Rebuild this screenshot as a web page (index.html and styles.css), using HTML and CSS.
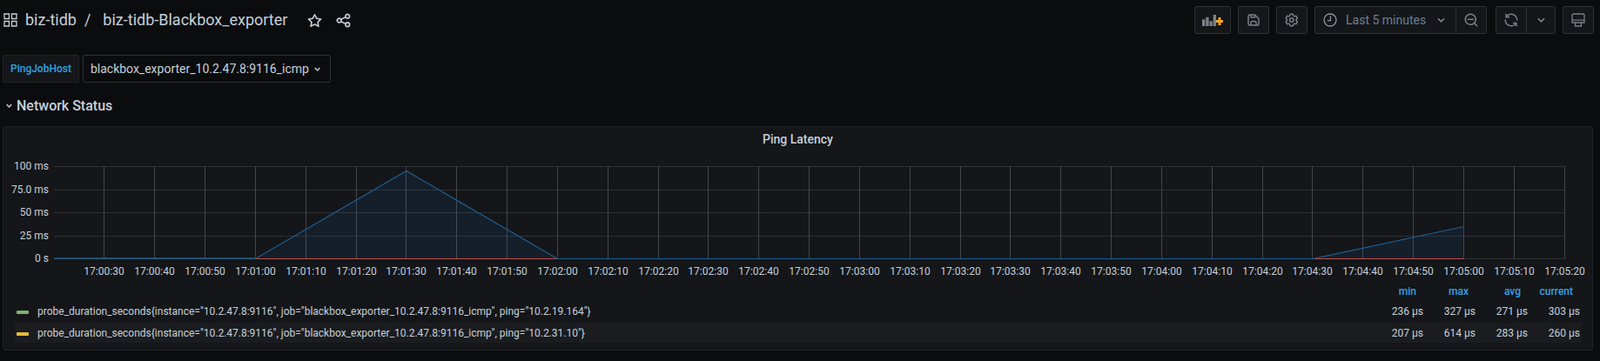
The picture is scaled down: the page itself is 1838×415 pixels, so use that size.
FILE: index.html
```html
<!DOCTYPE html>
<html lang="en">
<head>
    <meta charset="UTF-8">
    <title>biz-tidb-Blackbox_exporter</title>
    <link rel="stylesheet" href="styles.css">
</head>

<body>

<header class="navbar">
    <div class="crumbs">
        <svg class="ico ico-apps" viewBox="0 0 16 16"><path d="M1 1h5.5v5.5H1zM9.5 1H15v5.5H9.5zM1 9.5h5.5V15H1zM9.5 9.5H15V15H9.5z"/></svg>
        <span class="crumb">biz-tidb</span>
        <span class="crumb slash">/</span>
        <span class="crumb">biz-tidb-Blackbox_exporter</span>
        <svg class="uni uni-light uni-star" viewBox="0 0 24 24"><path d="M22,9.67A1,1,0,0,0,21.14,9l-5.69-.83L12.9,3a1,1,0,0,0-1.8,0L8.55,8.16,2.86,9a1,1,0,0,0-.81.68,1,1,0,0,0,.25,1l4.13,4-1,5.68A1,1,0,0,0,6.9,21.44L12,18.77l5.1,2.67a.93.93,0,0,0,.46.12,1,1,0,0,0,.59-.19,1,1,0,0,0,.4-1l-1-5.68,4.13-4A1,1,0,0,0,22,9.67Zm-6.15,4a1,1,0,0,0-.29.88l.72,4.2-3.76-2a1.06,1.06,0,0,0-.94,0l-3.76,2,.72-4.2a1,1,0,0,0-.29-.88l-3-3,4.21-.61a1,1,0,0,0,.76-.55L12,5.7l1.88,3.82a1,1,0,0,0,.76.55l4.21.61Z"/></svg>
        <svg class="uni uni-light uni-share" viewBox="0 0 24 24"><path d="M18,14a4,4,0,0,0-3.08,1.48l-5.1-2.35a3.64,3.64,0,0,0,0-2.26l5.1-2.35A4,4,0,1,0,14,6a4.17,4.17,0,0,0,.07.71L8.79,9.14a4,4,0,1,0,0,5.72l5.28,2.43A4.17,4.17,0,0,0,14,18a4,4,0,1,0,4-4ZM18,4a2,2,0,1,1-2,2A2,2,0,0,1,18,4ZM6,14a2,2,0,1,1,2-2A2,2,0,0,1,6,14Zm12,6a2,2,0,1,1,2-2A2,2,0,0,1,18,20Z"/></svg>
    </div>

    <div class="tools">
        <div class="btn btn-add">
            <svg viewBox="0 0 24 13"><path class="bars" d="M0 5.3h3.4V13H0zM4.2 2.7h3.4V13H4.2zM8.4 7.3h3.4V13H8.4zM12.6 0H16v13h-3.4z"/><path class="plus" d="M18.5 3h3v3H24v3h-2.5v3h-3V9H16V6h2.5z"/></svg>
        </div>
        <div class="btn btn-square">
            <svg class="uni" viewBox="0 0 24 24"><path d="M20.71,9.29l-6-6a1,1,0,0,0-.32-.21A1.09,1.09,0,0,0,14,3H6A3,3,0,0,0,3,6V18a3,3,0,0,0,3,3H18a3,3,0,0,0,3-3V10A1,1,0,0,0,20.71,9.29ZM9,5h4V7H9Zm6,14H9V16a1,1,0,0,1,1-1h4a1,1,0,0,1,1,1Zm4-1a1,1,0,0,1-1,1H17V16a3,3,0,0,0-3-3H10a3,3,0,0,0-3,3v3H6a1,1,0,0,1-1-1V6A1,1,0,0,1,6,5H7V8A1,1,0,0,0,8,9h6a1,1,0,0,0,1-1V6.41l4,4Z"/></svg>
        </div>
        <div class="btn btn-square">
            <svg class="uni" viewBox="0 0 24 24"><path d="M19.9,12.66a1,1,0,0,1,0-1.32L21.18,9.9a1,1,0,0,0,.12-1.17l-2-3.46a1,1,0,0,0-1.07-.48l-1.88.38a1,1,0,0,1-1.15-.66l-.61-1.83A1,1,0,0,0,13.64,2h-4a1,1,0,0,0-1,.68L8.08,4.51a1,1,0,0,1-1.15.66L5,4.79A1,1,0,0,0,4,5.27L2,8.73A1,1,0,0,0,2.1,9.9l1.27,1.44a1,1,0,0,1,0,1.32L2.1,14.1A1,1,0,0,0,2,15.27l2,3.46a1,1,0,0,0,1.07.48l1.88-.38a1,1,0,0,1,1.15.66l.61,1.83a1,1,0,0,0,1,.68h4a1,1,0,0,0,.95-.68l.61-1.83a1,1,0,0,1,1.15-.66l1.88.38a1,1,0,0,0,1.07-.48l2-3.46a1,1,0,0,0-.12-1.17ZM18.41,14l.8.9-1.28,2.22-1.18-.24a3,3,0,0,0-3.45,2L12.92,20H10.36L10,18.86a3,3,0,0,0-3.45-2l-1.18.24L4.07,14.89l.8-.9a3,3,0,0,0,0-4l-.8-.9L5.35,6.89l1.18.24a3,3,0,0,0,3.45-2L10.36,4h2.56l.38,1.14a3,3,0,0,0,3.45,2l1.18-.24,1.28,2.22-.8.9A3,3,0,0,0,18.41,14ZM11.64,8a4,4,0,1,0,4,4A4,4,0,0,0,11.64,8Zm0,6a2,2,0,1,1,2-2A2,2,0,0,1,11.64,14Z"/></svg>
        </div>
        <div class="btn-group">
            <div class="btn btn-time">
                <svg class="ico ico-clock" viewBox="0 0 16 16"><circle cx="8" cy="8" r="7"/><path d="M8.4 3.6V8.6H4.8"/></svg>
                <span class="time-text">Last 5 minutes</span>
                <svg class="chev" viewBox="0 0 10 6"><path d="M1 1l4 4 4-4"/></svg>
            </div>
            <div class="btn btn-square joined">
                <svg class="uni" viewBox="0 0 24 24"><path d="M21.71,20.29,18,16.61A9,9,0,1,0,16.61,18l3.68,3.68a1,1,0,0,0,1.42,0A1,1,0,0,0,21.71,20.29ZM11,18a7,7,0,1,1,7-7A7,7,0,0,1,11,18Zm4-8H7a1,1,0,0,0,0,2h8a1,1,0,0,0,0-2Z"/></svg>
            </div>
        </div>
        <div class="btn-group refresh">
            <div class="btn btn-square">
                <svg class="uni" viewBox="0 0 24 24"><path d="M19.91,15.51H15.38a1,1,0,0,0,0,2h2.4A8,8,0,0,1,4,12a1,1,0,0,0-2,0,10,10,0,0,0,16.88,7.23V21a1,1,0,0,0,2,0V16.5A1,1,0,0,0,19.91,15.51ZM12,2A10,10,0,0,0,5.12,4.77V3a1,1,0,0,0-2,0V7.5a1,1,0,0,0,1,1h4.5a1,1,0,0,0,0-2H6.22A8,8,0,0,1,20,12a1,1,0,0,0,2,0A10,10,0,0,0,12,2Z"/></svg>
            </div>
            <div class="btn btn-chev joined">
                <svg class="chev" viewBox="0 0 10 6"><path d="M1 1l4 4 4-4"/></svg>
            </div>
        </div>
        <div class="btn btn-square">
            <svg class="ico" viewBox="0 0 16 16"><path d="M2.5 1h11A1.5 1.5 0 0 1 15 2.5V11H1V2.5A1.5 1.5 0 0 1 2.5 1zM1 8.2h14M4.5 11v4h7v-4"/></svg>
        </div>
    </div>
</header>

<section class="submenu">
    <label class="var-label">PingJobHost</label>
    <div class="var-value">
        <span>blackbox_exporter_10.2.47.8:9116_icmp</span>
        <svg class="chev chev-small" viewBox="0 0 10 6"><path d="M1 1l4 4 4-4"/></svg>
    </div>
</section>

<div class="row-title">
    <svg class="chev chev-small" viewBox="0 0 10 6"><path d="M1 1l4 4 4-4"/></svg>
    <span>Network Status</span>
</div>

<article class="panel">
    <h2 class="panel-title">Ping Latency</h2>

    <svg id="chart" class="chart" width="1825" height="151"></svg>

    <table class="legend">
        <thead>
            <tr>
                <th class="name"></th>
                <th>min</th>
                <th>max</th>
                <th>avg</th>
                <th>current</th>
            </tr>
        </thead>
        <tbody>
            <tr>
                <td class="name"><i class="swatch green"></i>probe_duration_seconds{instance="10.2.47.8:9116", job="blackbox_exporter_10.2.47.8:9116_icmp", ping="10.2.19.164"}</td>
                <td>236 µs</td>
                <td>327 µs</td>
                <td>271 µs</td>
                <td>303 µs</td>
            </tr>
            <tr class="alt">
                <td class="name"><i class="swatch yellow"></i>probe_duration_seconds{instance="10.2.47.8:9116", job="blackbox_exporter_10.2.47.8:9116_icmp", ping="10.2.31.10"}</td>
                <td>207 µs</td>
                <td>614 µs</td>
                <td>283 µs</td>
                <td>260 µs</td>
            </tr>
        </tbody>
    </table>
</article>

<script src="chart.js"></script>

</body>

</html>
```

FILE: styles.css
```css
:root {
    margin:     0;
    padding:    0;
    font-family: Roboto, "Liberation Sans", sans-serif;
}
body {
    margin:     0;
    height:     415px;
    overflow:   hidden;
    background: #0b0c0e;
    color:      #c7d0d9;
    font-size:  14px;
}

.ico {
    width:      16px;
    height:     16px;
    fill:       none;
    stroke:     #7b8087;
    stroke-width: 1.3;
    flex:       none;
}
.uni {
    width:      18px;
    height:     18px;
    fill:       #7b8087;
    flex:       none;
}
.uni-light {
    width:      19px;
    height:     19px;
    fill:       #c7d0d9;
}
.chev {
    width:      9px;
    height:     6px;
    fill:       none;
    stroke:     #8e949c;
    stroke-width: 1.4;
    flex:       none;
}
.chev-small {
    width:      7px;
    height:     5px;
    stroke:     #c7d0d9;
    stroke-width: 2;
}

/* top bar */
.navbar {
    display:    flex;
    justify-content: space-between;
    align-items: center;
    height:     32px;
    padding:    7px 7px 0 4px;
}
.crumbs {
    display:    flex;
    align-items: center;
}
.crumb {
    font-size:  18px;
    line-height: 24px;
    color:      #c7d0d9;
}
.slash {
    margin:     0 14px 0 9px;
}
.ico-apps {
    stroke:     #c7d0d9;
    margin-right: 9px;
}
.uni-star {
    margin-left: 22px;
}
.uni-share {
    margin-left: 14px;
}

.tools {
    display:    flex;
    gap:        8px;
}
.btn-group {
    display:    flex;
}
.refresh {
    margin-left: 2px;
}
.btn {
    display:    flex;
    align-items: center;
    justify-content: center;
    height:     32px;
    box-sizing: border-box;
    background: #141619;
    border:     1px solid #2c3235;
    border-radius: 2px;
}
.btn-add {
    width:      42px;
}
.btn-add svg {
    width:      24px;
    height:     13px;
}
.bars {
    fill:       #7b8087;
}
.plus {
    fill:       #f5a623;
}
.btn-square {
    width:      36px;
}
.btn-time {
    width:      163px;
    justify-content: flex-start;
    padding-left: 9px;
}
.ico-clock {
    stroke:     #8e949c;
}
.time-text {
    color:      #6e7f93;
    margin:     0 13px 0 10px;
}
.btn-chev {
    width:      34px;
}
.btn-group > .btn:first-child {
    border-radius: 2px 0 0 2px;
}
.btn-group .joined {
    margin-left: -1px;
    border-radius: 0 2px 2px 0;
}

/* template variables */
.submenu {
    display:    flex;
    gap:        4px;
    padding:    24px 0 0 3px;
}
.var-label {
    display:    flex;
    align-items: center;
    height:     32px;
    box-sizing: border-box;
    padding:    0 8px;
    background: #141619;
    border:     1px solid #202226;
    border-radius: 2px;
    color:      #33a2e5;
    font-size:  12px;
    font-weight: 500;
}
.var-value {
    display:    flex;
    align-items: center;
    gap:        6px;
    height:     32px;
    box-sizing: border-box;
    padding:    0 11px 0 8px;
    border:     1px solid #2c3235;
    border-radius: 2px;
}

.row-title {
    display:    flex;
    align-items: center;
    gap:        5px;
    height:     24px;
    margin-top: 14px;
    padding-left: 7px;
    font-size:  16px;
    font-weight: 500;
}

/* panel */
.panel {
    box-sizing: border-box;
    width:      1827px;
    height:     258px;
    margin:     12px 0 0 3px;
    background: #141619;
    border:     1px solid #202226;
    border-radius: 3px;
}
.panel-title {
    margin:     0;
    height:     28px;
    line-height: 28px;
    text-align: center;
    font-size:  14px;
    font-weight: 500;
}
.chart {
    display:    block;
}
.chart text {
    fill:       #c7d0d9;
    font-size:  12px;
}
.grid {
    stroke:     #2f3034;
    stroke-width: 1;
}
.grid-v {
    stroke:     #45464a;
    stroke-width: 1;
}

.legend {
    border-collapse: collapse;
    margin-left: 13px;
    width:      1800px;
    font-size:  12px;
}
.legend th {
    width:      60px;
    height:     20px;
    box-sizing: border-box;
    padding:    0 10px 0 0;
    text-align: right;
    color:      #33a2e5;
    font-weight: 500;
}
.legend td {
    height:     26px;
    padding:    0 2px 0 0;
    text-align: right;
}
.legend .name {
    width:      auto;
    text-align: left;
}
.legend .alt td {
    height:     22px;
    padding-top: 1px;
}
.alt {
    background: #1a1c1f;
}
.swatch {
    display:    inline-block;
    width:      14px;
    height:     4px;
    margin:     0 10px 0 2px;
    vertical-align: middle;
    border-radius: 1px;
}
.green {
    background: #7eb26d;
}
.yellow {
    background: #eab839;
}
```

FILE: chart.js
```js
const NS = "http://www.w3.org/2000/svg";
const chart = document.getElementById("chart");

// panel is at (3,145) with a 1px border, title is 28 high, so the svg starts at (4,174)
const ox = 4, oy = 174;
const plotLeft = 62;
const y100 = 191, y0 = 297;
const tick0 = 119.8, tickStep = 57.84;

const add = (tag, attrs, text) => {
    const el = document.createElementNS(NS, tag);
    Object.keys(attrs).forEach(k => el.setAttribute(k, attrs[k]));
    if (text) el.textContent = text;
    chart.appendChild(el);
    return el;
};
const X = x => x - ox;
const Y = y => y - oy;
const at = i => tick0 + i * tickStep;
const plotRight = Math.round(at(29)) + 0.5;

// horizontal grid and y labels
["100 ms", "75.0 ms", "50 ms", "25 ms", "0 s"].forEach((label, i) => {
    const y = Math.round(y100 + i * (y0 - y100) / 4) + 0.5;
    add("line", {x1: X(plotLeft), y1: Y(y), x2: X(plotRight), y2: Y(y), "class": "grid"});
    add("text", {x: X(56), y: Y(y + 3.5), "text-anchor": "end"}, label);
});

// vertical grid and time labels
for (let i = 0; i < 30; i++) {
    const x = Math.floor(at(i)) + 0.5;
    const total = 30 + i * 10;
    const min = Math.floor(total / 60);
    const sec = String(total % 60).padStart(2, "0");
    add("line", {x1: X(x), y1: Y(y100), x2: X(x), y2: Y(y0 + 0.5), "class": "grid-v"});
    add("text", {x: X(x), y: Y(316), "text-anchor": "middle"}, `17:0${min}:${sec}`);
}

// series
const pointList = pts => pts.map(p => X(p[0]) + "," + Y(p[1])).join(" ");
const area = pts => add("polygon", {points: pointList(pts), fill: "rgba(31,120,193,0.1)"});
const path = (pts, color) => add("polyline", {points: pointList(pts), fill: "none", stroke: color, "stroke-width": 1.2});

const base = y0 + 0.5;
const peak = 196.5, tail = 260.5;
area([[at(3), base], [at(6), peak], [at(9), base]]);
area([[at(24), base], [at(27), tail], [at(27), base]]);

path([[plotLeft, base - 1], [at(3), base - 1]], "#33453a");
path([[at(3), base], [at(9), base]], "#bf4b45");
path([[at(24), base], [at(27), base]], "#bf4b45");
path([[plotLeft, base], [at(3), base], [at(6), peak], [at(9), base]], "#1f5f93");
path([[at(9), base], [at(24), base], [at(27), tail]], "#1f5f93");
```
